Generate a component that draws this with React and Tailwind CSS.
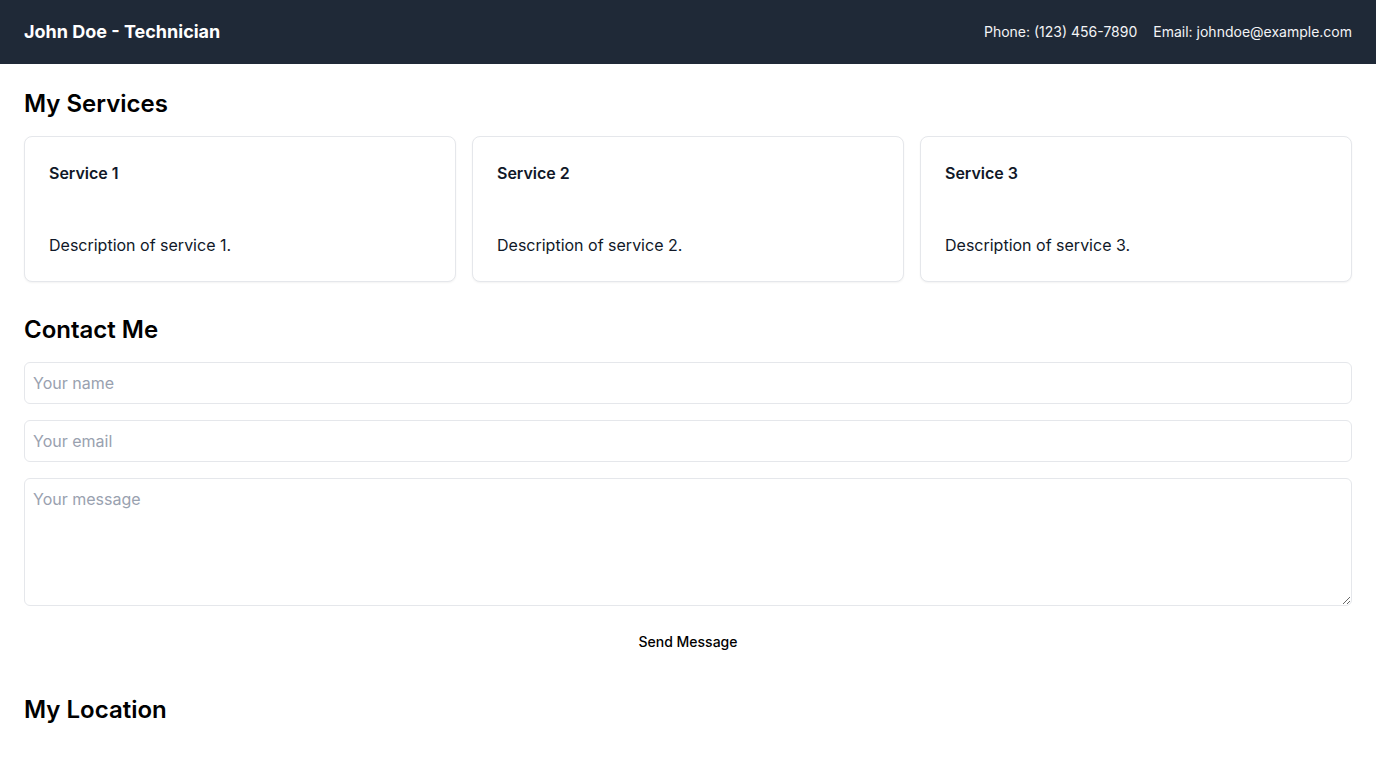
import React from 'react';

const services = [
  { title: 'Service 1', description: 'Description of service 1.' },
  { title: 'Service 2', description: 'Description of service 2.' },
  { title: 'Service 3', description: 'Description of service 3.' },
];

function ServiceCard({ title, description }) {
  return (
    <div className="rounded-lg border border-gray-200 bg-white shadow-[0_1px_2px_0_rgba(0,0,0,0.05)]">
      <div className="p-6">
        <h3 className="text-base font-semibold text-gray-900">{title}</h3>
      </div>
      <div className="p-6">
        <p className="text-base text-gray-900">{description}</p>
      </div>
    </div>
  );
}

export default function App() {
  return (
    <div className="min-h-screen bg-white text-black" style={{ fontFamily: 'Inter, "Noto Sans", sans-serif' }}>
      <header className="h-16 bg-[#1f2937] text-white px-6 flex items-center justify-between">
        <h1 className="text-lg font-bold">John Doe - Technician</h1>
        <div className="flex items-center gap-4 text-sm text-gray-100">
          <span>Phone: (123) 456-7890</span>
          <span>Email: johndoe@example.com</span>
        </div>
      </header>

      <main className="p-6">
        <section>
          <h2 className="text-2xl font-semibold mb-4">My Services</h2>
          <div className="grid grid-cols-3 gap-4">
            {services.map((s) => (
              <ServiceCard key={s.title} {...s} />
            ))}
          </div>
        </section>

        <section className="mt-8">
          <h2 className="text-2xl font-semibold mb-4">Contact Me</h2>
          <form className="flex flex-col gap-4" onSubmit={(e) => e.preventDefault()}>
            <input
              type="text"
              placeholder="Your name"
              className="w-full rounded-md border border-gray-200 px-2 py-2 text-base leading-6 placeholder:text-gray-400 outline-none"
            />
            <input
              type="email"
              placeholder="Your email"
              className="w-full rounded-md border border-gray-200 px-2 py-2 text-base leading-6 placeholder:text-gray-400 outline-none"
            />
            <textarea
              placeholder="Your message"
              className="w-full h-32 rounded-md border border-gray-200 px-2 py-2 text-base leading-6 placeholder:text-gray-400 outline-none"
            />
            <button type="submit" className="h-10 w-full text-sm font-medium text-black">
              Send Message
            </button>
          </form>
        </section>

        <section className="mt-8">
          <h2 className="text-2xl font-semibold mb-4">My Location</h2>
        </section>
      </main>
    </div>
  );
}
